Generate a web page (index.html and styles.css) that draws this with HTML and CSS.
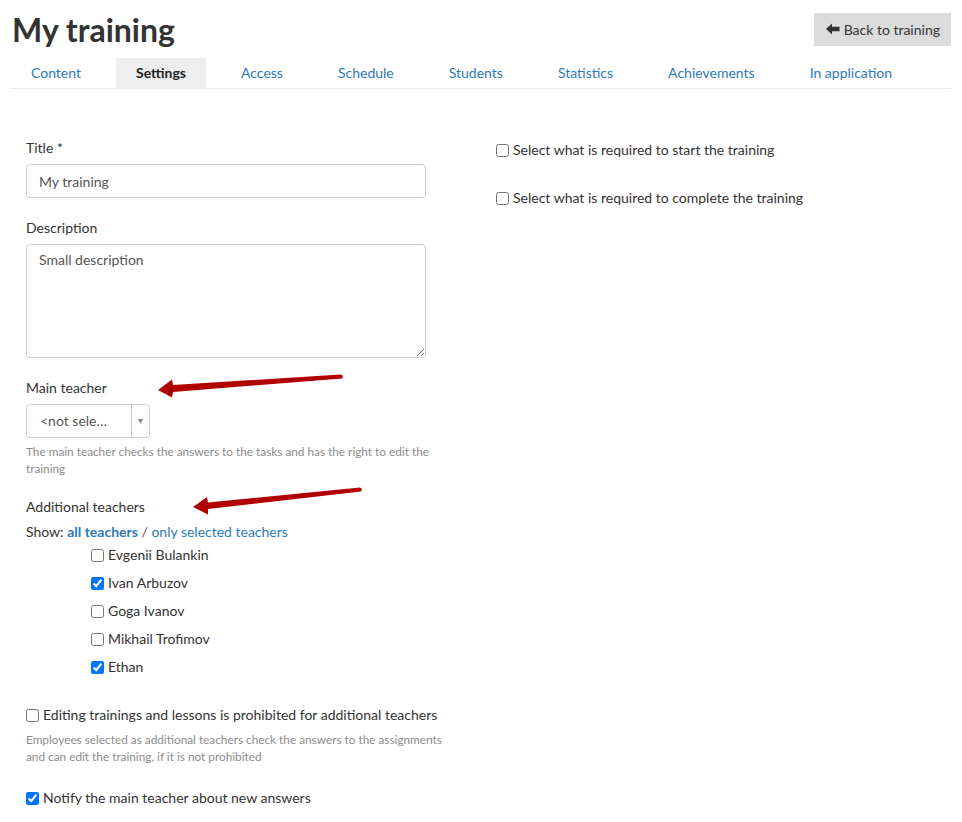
FILE: index.html
```html
<!DOCTYPE html>
<html lang="en">

<head>
    <meta charset="UTF-8">
    <meta name="viewport" content="width=device-width, initial-scale=1.0">
    <title>My training - Settings</title>
    <link rel="stylesheet" href="styles.css">
</head>

<body>
    <div class="page">
        <div class="header">
            <h1>My training</h1>
            <a href="#" class="btn-back">
                <svg class="icon-back" width="14" height="12" viewBox="0 0 14 12">
                    <path d="M0 6 L6 0.5 L6 3.8 L13.5 3.8 L13.5 8.2 L6 8.2 L6 11.5 Z" fill="#333" />
                </svg>Back to training
            </a>
        </div>

        <ul class="tabs">
            <li><a href="#">Content</a></li>
            <li class="active"><a href="#">Settings</a></li>
            <li><a href="#">Access</a></li>
            <li><a href="#">Schedule</a></li>
            <li><a href="#">Students</a></li>
            <li><a href="#">Statistics</a></li>
            <li><a href="#">Achievements</a></li>
            <li><a href="#">In application</a></li>
        </ul>

        <div class="settings">
            <div class="col col-left">
                <div class="form-group">
                    <label class="control-label">Title *</label>
                    <input type="text" class="form-control" value="My training">
                </div>

                <div class="form-group">
                    <label class="control-label">Description</label>
                    <textarea class="form-control textarea">Small description</textarea>
                </div>

                <div class="form-group">
                    <label class="control-label">Main teacher</label>
                    <div class="select-box">
                        <span class="select-value">&lt;not sele…</span>
                        <span class="select-arrow">▾</span>
                    </div>
                    <p class="help">The main teacher checks the answers to the tasks and has the right to edit the training</p>
                </div>

                <div class="form-group">
                    <label class="control-label">Additional teachers</label>
                    <div class="show-filter">
                        Show: <a href="#" class="current">all teachers</a> <span class="sep">/</span> <a href="#">only selected teachers</a>
                    </div>
                    <div class="teacher-list">
                        <label class="check"><input type="checkbox">Evgenii Bulankin</label>
                        <label class="check"><input type="checkbox" checked>Ivan Arbuzov</label>
                        <label class="check"><input type="checkbox">Goga Ivanov</label>
                        <label class="check"><input type="checkbox">Mikhail Trofimov</label>
                        <label class="check"><input type="checkbox" checked>Ethan</label>
                    </div>
                </div>

                <div class="form-group option">
                    <label class="check"><input type="checkbox">Editing trainings and lessons is prohibited for additional teachers</label>
                    <p class="help">Employees selected as additional teachers check the answers to the assignments and can edit the training, if it is not prohibited</p>
                </div>

                <div class="form-group option notify">
                    <label class="check"><input type="checkbox" checked>Notify the main teacher about new answers</label>
                </div>
            </div>

            <div class="col col-right">
                <label class="check req"><input type="checkbox">Select what is required to start the training</label>
                <label class="check req"><input type="checkbox">Select what is required to complete the training</label>
            </div>
        </div>

        <!-- annotation arrows -->
        <svg class="annotations" width="962" height="822" viewBox="0 0 962 822">
            <path d="M158 390 L172 379.5 L173 385 L341 374.5 Q344 376 342 378.5 L173 392 L172 397.5 Z" fill="#b10000" />
            <path d="M193 507 L207 497 L208 502.5 L360 487.5 Q363 489 361 491.5 L208 509 L208 514.5 Z" fill="#b10000" />
        </svg>
    </div>
</body>

</html>
```

FILE: styles.css
```css
body {
    margin: 0;
    font-family: Lato, "Open Sans", sans-serif;
    font-size: 14px;
    color: #333;
    background: #fff;
}

a {
    color: #2d7ab9;
    text-decoration: none;
}

.page {
    position: relative;
    width: 940px;
    padding: 0 11px;
}

.header {
    display: flex;
    justify-content: space-between;
    align-items: center;
    height: 58px;
}

.header h1 {
    margin: 0 0 0 1px;
    font-size: 32px;
    font-weight: 700;
    color: #333;
}

.btn-back {
    display: flex;
    align-items: center;
    gap: 4px;
    height: 33px;
    padding: 0 11px 0 12px;
    background-color: #dcdcdc;
    color: #333;
    font-size: 14px;
}

.tabs {
    display: flex;
    gap: 15px;
    margin: 0;
    padding: 0;
    list-style: none;
    border-bottom: 1px solid #eaeaea;
}

.tabs li a {
    display: block;
    padding: 6px 20px;
    line-height: 18px;
}

.tabs li.active a {
    background-color: #eee;
    color: #222;
    font-weight: 700;
}

.settings {
    display: grid;
    grid-template-columns: 470px 470px;
    padding-top: 49px;
}

.col {
    padding: 0 15px;
}

.form-group {
    margin-bottom: 20px;
}

.control-label {
    display: block;
    line-height: 20px;
    margin-bottom: 6px;
}

.form-control {
    display: block;
    box-sizing: border-box;
    width: 400px;
    height: 34px;
    padding: 6px 12px;
    border: 1px solid #ccc;
    border-radius: 4px;
    font-family: inherit;
    font-size: 14px;
    color: #555;
}

.textarea {
    height: 114px;
    padding-top: 6px;
    resize: vertical;
}

.select-box {
    display: flex;
    box-sizing: border-box;
    width: 124px;
    height: 34px;
    border: 1px solid #ccc;
    border-radius: 4px;
    color: #555;
}

.select-value {
    flex: 1;
    padding-left: 13px;
    line-height: 32px;
}

.select-arrow {
    width: 17px;
    border-left: 1px solid #ccc;
    text-align: center;
    line-height: 30px;
    font-size: 10px;
    color: #888;
}

.help {
    max-width: 425px;
    margin: 5px 0 0;
    font-size: 11.8px;
    line-height: 17px;
    color: #8c8c8c;
}

.show-filter {
    line-height: 20px;
    margin-top: -1px;
}

.show-filter .current {
    font-weight: 700;
}

.show-filter .sep {
    color: #555;
}

.teacher-list {
    padding-left: 65px;
    margin-top: 3px;
}

.teacher-list .check {
    margin-bottom: 8px;
}

.check {
    display: flex;
    align-items: center;
    line-height: 20px;
}

.check input {
    width: 13px;
    height: 13px;
    margin: 0 4px 0 0;
}

.option {
    margin-top: 28px;
}

.option .help {
    margin-top: 6px;
}

.option.notify {
    margin-top: 23px;
}

.col-right {
    padding-top: 2px;
}

.col-right .req {
    margin-bottom: 28px;
}

.annotations {
    position: absolute;
    top: 0;
    left: 0;
    pointer-events: none;
}
```
